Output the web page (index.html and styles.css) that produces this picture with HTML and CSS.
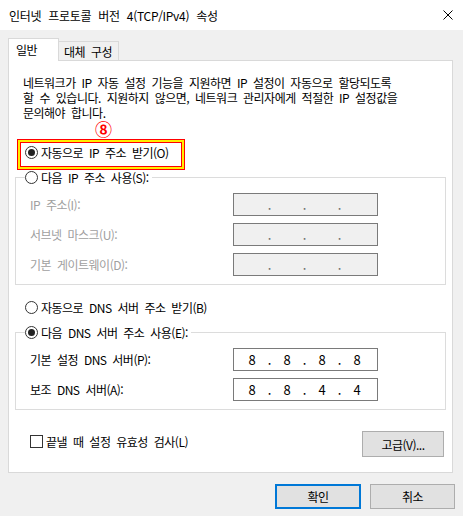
FILE: index.html
```html
<!DOCTYPE html>
<html lang="ko">
<head>
<meta charset="utf-8">
<title>인터넷 프로토콜 버전 4(TCP/IPv4) 속성</title>
<link rel="stylesheet" href="styles.css">
</head>
<body>
<div class="window">
  <div class="titlebar">
    <span class="title">인터넷 프로토콜 버전 4(TCP/IPv4) 속성</span>
    <svg class="close" viewBox="0 0 10 10" width="10" height="10"><path d="M0.5 0.5L9.5 9.5M9.5 0.5L0.5 9.5" stroke="#000" stroke-width="1" fill="none"/></svg>
  </div>
  <div class="tabs">
    <div class="tab active">일반</div>
    <div class="tab">대체 구성</div>
  </div>
  <div class="panel">
    <p class="desc">네트워크가 IP 자동 설정 기능을 지원하면 IP 설정이 자동으로 할당되도록<br>할 수 있습니다. 지원하지 않으면, 네트워크 관리자에게 적절한 IP 설정값을<br>문의해야 합니다.</p>
    <div class="marker">⑧</div>
    <div class="highlight">
      <div class="opt"><span class="radio on"></span><span>자동으로 IP 주소 받기(O)</span></div>
    </div>
    <fieldset class="group">
      <legend><span class="opt"><span class="radio"></span><span>다음 IP 주소 사용(S):</span></span></legend>
      <div class="row disabled"><span class="lbl">IP 주소(I):</span>
        <div class="ipbox off"><span class="oct"></span><span class="dot">.</span><span class="oct"></span><span class="dot">.</span><span class="oct"></span><span class="dot">.</span><span class="oct"></span></div></div>
      <div class="row disabled"><span class="lbl">서브넷 마스크(U):</span>
        <div class="ipbox off"><span class="oct"></span><span class="dot">.</span><span class="oct"></span><span class="dot">.</span><span class="oct"></span><span class="dot">.</span><span class="oct"></span></div></div>
      <div class="row disabled"><span class="lbl">기본 게이트웨이(D):</span>
        <div class="ipbox off"><span class="oct"></span><span class="dot">.</span><span class="oct"></span><span class="dot">.</span><span class="oct"></span><span class="dot">.</span><span class="oct"></span></div></div>
    </fieldset>
    <div class="opt dns-auto"><span class="radio"></span><span>자동으로 DNS 서버 주소 받기(B)</span></div>
    <fieldset class="group group-dns">
      <legend><span class="opt"><span class="radio on"></span><span>다음 DNS 서버 주소 사용(E):</span></span></legend>
      <div class="row"><span class="lbl">기본 설정 DNS 서버(P):</span>
        <div class="ipbox"><span class="oct">8</span><span class="dot">.</span><span class="oct">8</span><span class="dot">.</span><span class="oct">8</span><span class="dot">.</span><span class="oct">8</span></div></div>
      <div class="row"><span class="lbl">보조 DNS 서버(A):</span>
        <div class="ipbox"><span class="oct">8</span><span class="dot">.</span><span class="oct">8</span><span class="dot">.</span><span class="oct">4</span><span class="dot">.</span><span class="oct">4</span></div></div>
    </fieldset>
    <div class="footer-row">
      <div class="check"><span class="box"></span><span>끝낼 때 설정 유효성 검사(L)</span></div>
      <button class="btn adv">고급(V)...</button>
    </div>
  </div>
  <div class="actions">
    <button class="btn primary">확인</button>
    <button class="btn cancel">취소</button>
  </div>
</div>
</body>
</html>
```
FILE: styles.css
```css
html, body {
  margin: 0;
  padding: 0;
}
body {
  background: #f0f0f0;
  font-family: "Noto Sans CJK KR", sans-serif;
  font-size: 12px;
  line-height: 15px;
  color: #000;
  letter-spacing: -0.5px;
  word-spacing: 3px;
}
.window {
  width: 463px;
  height: 516px;
  overflow: hidden;
}
.titlebar {
  height: 30px;
  background: #fff;
  display: flex;
  align-items: center;
  justify-content: space-between;
  padding: 0 10px 0 9px;
  box-sizing: border-box;
}
.title {
  word-spacing: 4px;
  letter-spacing: -0.3px;
}
.close {
  display: block;
}
.tabs {
  display: flex;
  align-items: flex-end;
  height: 22px;
  margin-top: 8px;
  padding-left: 8px;
}
.tab {
  box-sizing: border-box;
  border: 1px solid #d9d9d9;
  border-bottom: none;
  white-space: nowrap;
}
.tab.active {
  width: 51px;
  height: 23px;
  margin-bottom: -1px;
  background: #fff;
  padding: 3px 0 0 7px;
  position: relative;
  z-index: 1;
}
.tab:not(.active) {
  width: 60px;
  height: 19px;
  border-left: none;
  background: #f0f0f0;
  padding: 2px 0 0 5px;
}
.panel {
  width: 445px;
  height: 413px;
  margin-left: 8px;
  box-sizing: border-box;
  border: 1px solid #d9d9d9;
  background: #fff;
  padding: 14px 0 14px 0;
}
.desc {
  margin: 0 0 0 14px;
  white-space: nowrap;
}
.marker {
  height: 19px;
  margin-left: 86px;
  color: #f00;
  font-weight: bold;
  font-size: 17px;
  line-height: 17px;
  letter-spacing: 0;
}
.highlight {
  margin-left: 9px;
  width: 166px;
  height: 29px;
  box-sizing: border-box;
  border: 2px solid #ffee00;
  outline: 1px solid #f00;
  box-shadow: inset 0 0 0 1px #f00;
  padding: 3px 0 0 5px;
  margin-top: 1px;
}
.opt {
  display: flex;
  align-items: center;
  gap: 3px;
  height: 15px;
  white-space: nowrap;
}
.radio {
  width: 13px;
  height: 13px;
  box-sizing: border-box;
  border: 1px solid #333;
  border-radius: 50%;
  background: #fff;
  display: flex;
  align-items: center;
  justify-content: center;
  flex: none;
}
.radio.on::after {
  content: "";
  width: 7px;
  height: 7px;
  border-radius: 50%;
  background: #222;
}
.group {
  margin: 1px 6px 0;
  padding: 8px 0 8px 0;
  border: 1px solid #dcdcdc;
  min-width: 0;
}
.group legend {
  margin-left: 9px;
  padding: 0 3px 0 0;
  background: #fff;
}
.group-dns {
  margin-top: 10px;
}
.row {
  display: flex;
  align-items: center;
  height: 23px;
  padding-left: 14px;
}
.row + .row {
  margin-top: 7px;
}
.lbl {
  width: 203px;
  flex: none;
  white-space: nowrap;
}
.disabled .lbl {
  color: #a0a0a0;
}
.ipbox {
  width: 145px;
  height: 23px;
  box-sizing: border-box;
  border: 1px solid #7a7a7a;
  background: #fff;
  display: flex;
  align-items: center;
  padding-left: 3px;
  font-size: 13px;
  letter-spacing: 0;
  word-spacing: 0;
}
.ipbox.off {
  background: #f0f0f0;
  color: #6d6d6d;
}
.oct {
  width: 30px;
  text-align: center;
}
.dot {
  width: 5px;
  text-align: center;
}
.dns-auto {
  margin: 15px 0 0 16px;
}
.footer-row {
  display: flex;
  justify-content: space-between;
  align-items: flex-start;
  margin: 21px 8px 0 21px;
}
.check {
  display: flex;
  align-items: center;
  gap: 3px;
  margin-top: 3px;
  white-space: nowrap;
}
.check .box {
  width: 13px;
  height: 13px;
  box-sizing: border-box;
  border: 1px solid #333;
  background: #fff;
}
.btn {
  font: inherit;
  letter-spacing: inherit;
  color: #000;
  background: #e1e1e1;
  border: 1px solid #adadad;
  padding: 0;
  margin: 0;
  box-sizing: border-box;
}
.adv {
  width: 82px;
  height: 26px;
}
.actions {
  display: flex;
  justify-content: flex-end;
  gap: 9px;
  margin-top: 11px;
  padding-right: 8px;
}
.primary {
  width: 86px;
  height: 25px;
  border: 2px solid #0078d7;
}
.cancel {
  width: 85px;
  height: 25px;
}
```
